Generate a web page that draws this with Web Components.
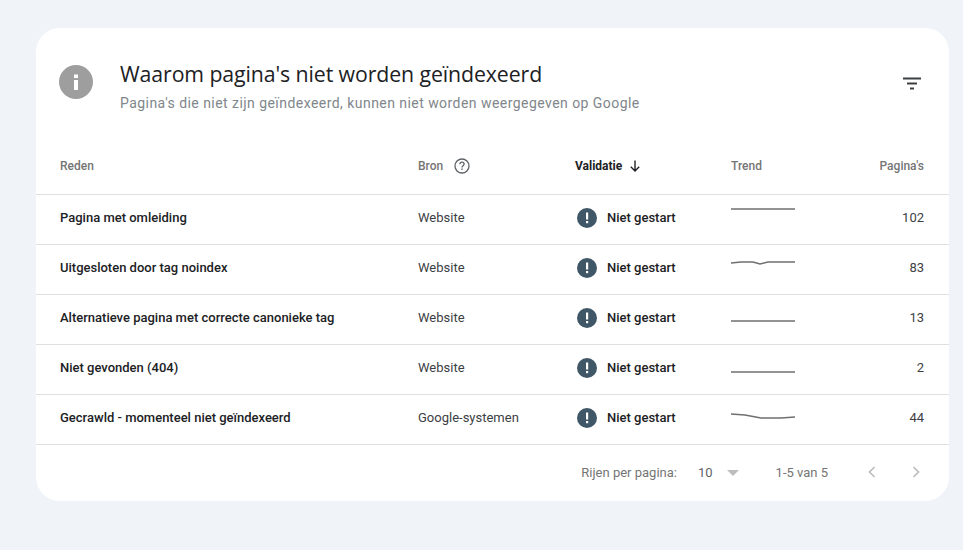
<!DOCTYPE html>
<html lang="nl">
<head>
<meta charset="utf-8">
<title>Waarom pagina's niet worden geïndexeerd</title>
<style>
  html, body { margin: 0; height: 100%; }
  body {
    background: #f0f4f9;
    font-family: Roboto, "Liberation Sans", sans-serif;
    padding: 28px 14px 0 36px;
    box-sizing: border-box;
    overflow: hidden;
  }
</style>
</head>
<body>
<gsc-card>
  <gsc-header slot="header" title="Waarom pagina's niet worden geïndexeerd"
    subtitle="Pagina's die niet zijn geïndexeerd, kunnen niet worden weergegeven op Google"></gsc-header>
  <gsc-head-row></gsc-head-row>
  <gsc-row reason="Pagina met omleiding" source="Website" pages="102" points="0,10 64,10"></gsc-row>
  <gsc-row reason="Uitgesloten door tag noindex" source="Website" pages="83" points="0,14 10,13 22,13 29,15 37,13 64,13"></gsc-row>
  <gsc-row reason="Alternatieve pagina met correcte canonieke tag" source="Website" pages="13" points="0,22 64,22"></gsc-row>
  <gsc-row reason="Niet gevonden (404)" source="Website" pages="2" points="0,23 64,23"></gsc-row>
  <gsc-row reason="Gecrawld - momenteel niet geïndexeerd" source="Google-systemen" pages="44" points="0,15 14,16 30,19 50,19 64,18"></gsc-row>
  <gsc-pager></gsc-pager>
</gsc-card>

<script>
const COLUMNS = 'grid-template-columns: 358px 157px 156px 1fr;';

class GscCard extends HTMLElement {
  constructor() {
    super();
    this.attachShadow({ mode: 'open' }).innerHTML = `
    <style>
      :host {
        display: block;
        width: 913px;
        height: 473px;
        background: #fff;
        border-radius: 24px;
        overflow: hidden;
      }
    </style>
    <slot name="header"></slot>
    <slot></slot>`;
  }
}

class GscHeader extends HTMLElement {
  connectedCallback() {
    if (this.shadowRoot) return;
    this.attachShadow({ mode: 'open' }).innerHTML = `
    <style>
      :host {
        display: flex;
        height: 110px;
        box-sizing: border-box;
        padding: 36px 25px 0 23px;
      }
      .info { flex: none; width: 34px; height: 34px; margin-top: 1px; }
      .text { flex: 1; margin-left: 27px; }
      h1 {
        margin: -1px 0 0;
        font: 400 21.3px/22px "Open Sans", Roboto, sans-serif;
        letter-spacing: -0.1px;
        color: #202124;
      }
      p {
        margin: 8px 0 0;
        font: 400 14px/20px Roboto, sans-serif;
        letter-spacing: 0.45px;
        color: #80868b;
      }
      .filter { flex: none; width: 24px; height: 24px; margin-top: 7px; }
    </style>
    <svg class="info" viewBox="0 0 34 34">
      <circle cx="17" cy="17" r="17" fill="#9e9e9e"/>
      <rect x="15" y="15" width="4" height="10" fill="#fff"/>
      <rect x="15" y="9.5" width="4" height="3.6" fill="#fff"/>
    </svg>
    <div class="text">
      <h1>${this.getAttribute('title')}</h1>
      <p>${this.getAttribute('subtitle')}</p>
    </div>
    <svg class="filter" viewBox="0 0 24 24">
      <path d="M3 6.5h18v2H3zM7 11.5h10v2H7zM10 16.5h4v2h-4z" fill="#3c4043"/>
    </svg>`;
    this.removeAttribute('title');
  }
}

class GscHeadRow extends HTMLElement {
  constructor() {
    super();
    this.attachShadow({ mode: 'open' }).innerHTML = `
    <style>
      :host {
        display: grid;
        ${COLUMNS}
        height: 57px;
        box-sizing: border-box;
        padding: 0 25px 1px 24px;
        border-bottom: 1px solid #e0e0e0;
        align-items: center;
        font: 500 12px/16px Roboto, sans-serif;
        color: #757575;
      }
      .cell { display: flex; align-items: center; }
      .sorted { color: #202124; font-weight: 700; }
      .help { width: 18px; height: 18px; margin-left: 10px; }
      .arrow { width: 14px; height: 14px; margin-left: 6px; }
      .trend { display: flex; justify-content: space-between; }
    </style>
    <div class="cell">Reden</div>
    <div class="cell">Bron
      <svg class="help" viewBox="0 0 18 18" fill="none">
        <circle cx="9" cy="9" r="7" stroke="#5f6368" stroke-width="1.3"/>
        <path d="M6.9 7.2c0-1.2 1-2 2.1-2s2.1.8 2.1 1.9c0 1.6-2.1 1.6-2.1 3.3" stroke="#5f6368" stroke-width="1.3"/>
        <rect x="8.3" y="11.4" width="1.4" height="1.4" fill="#5f6368"/>
      </svg>
    </div>
    <div class="cell sorted">Validatie
      <svg class="arrow" viewBox="0 0 14 14" fill="none">
        <path d="M7 1.5v10.5M2.8 7.8 7 12l4.2-4.2" stroke="#202124" stroke-width="1.4"/>
      </svg>
    </div>
    <div class="trend"><span>Trend</span><span>Pagina's</span></div>`;
  }
}

class GscSpark extends HTMLElement {
  connectedCallback() {
    if (this.shadowRoot) return;
    this.attachShadow({ mode: 'open' }).innerHTML = `
    <style>
      :host { display: block; width: 64px; height: 37px; }
      svg { display: block; }
    </style>
    <svg width="64" height="37" viewBox="0 0 64 37">
      <polyline points="${this.getAttribute('points').replace(/(\d+),(\d+)/g, '$1,$2')}" fill="none" stroke="#6f6f6f" stroke-width="1.5"/>
    </svg>`;
  }
}

class GscRow extends HTMLElement {
  connectedCallback() {
    if (this.shadowRoot) return;
    this.attachShadow({ mode: 'open' }).innerHTML = `
    <style>
      :host {
        display: grid;
        ${COLUMNS}
        height: 50px;
        box-sizing: border-box;
        padding: 0 25px 4px 24px;
        border-bottom: 1px solid #e0e0e0;
        align-items: center;
        font: 400 13px/20px Roboto, sans-serif;
        color: #3c4043;
      }
      .reason { font-weight: 500; color: #202124; }
      .status { display: flex; align-items: center; font-weight: 500; color: #202124; }
      .status svg { width: 20px; height: 20px; margin: 1px 10px 0 2px; }
      .last { display: flex; justify-content: space-between; align-items: center; }
    </style>
    <div class="reason">${this.getAttribute('reason')}</div>
    <div>${this.getAttribute('source')}</div>
    <div class="status">
      <svg viewBox="0 0 20 20">
        <circle cx="10" cy="10" r="10" fill="#3f5766"/>
        <rect x="9" y="4.5" width="2.2" height="7" fill="#fff"/>
        <rect x="9" y="13" width="2.2" height="2.2" fill="#fff"/>
      </svg>
      Niet gestart
    </div>
    <div class="last">
      <gsc-spark points="${this.getAttribute('points')}"></gsc-spark>
      <span>${this.getAttribute('pages')}</span>
    </div>`;
  }
}

class GscPager extends HTMLElement {
  constructor() {
    super();
    this.attachShadow({ mode: 'open' }).innerHTML = `
    <style>
      :host {
        display: flex;
        justify-content: flex-end;
        align-items: center;
        height: 55px;
        padding-right: 26px;
        font: 400 13px/16px Roboto, sans-serif;
        color: #757575;
      }
      .size { margin-left: 21px; color: #5f6368; }
      .caret {
        width: 0; height: 0;
        margin: 0 0 0 14px;
        border: 6px solid transparent;
        border-top: 6px solid #bdbdbd;
        border-bottom: 0;
      }
      .range { margin: 0 37px 0 37px; }
      svg { width: 14px; height: 14px; display: block; margin-top: -2px; }
      .next { margin-left: 30px; }
    </style>
    <span>Rijen per pagina:</span>
    <span class="size">10</span>
    <span class="caret"></span>
    <span class="range">1-5 van 5</span>
    <svg viewBox="0 0 14 14" fill="none"><path d="M9.5 2 4.5 7l5 5" stroke="#bdbdbd" stroke-width="1.7"/></svg>
    <svg class="next" viewBox="0 0 14 14" fill="none"><path d="M4.5 2l5 5-5 5" stroke="#bdbdbd" stroke-width="1.7"/></svg>`;
  }
}

customElements.define('gsc-card', GscCard);
customElements.define('gsc-header', GscHeader);
customElements.define('gsc-head-row', GscHeadRow);
customElements.define('gsc-spark', GscSpark);
customElements.define('gsc-row', GscRow);
customElements.define('gsc-pager', GscPager);
</script>
</body>
</html>
